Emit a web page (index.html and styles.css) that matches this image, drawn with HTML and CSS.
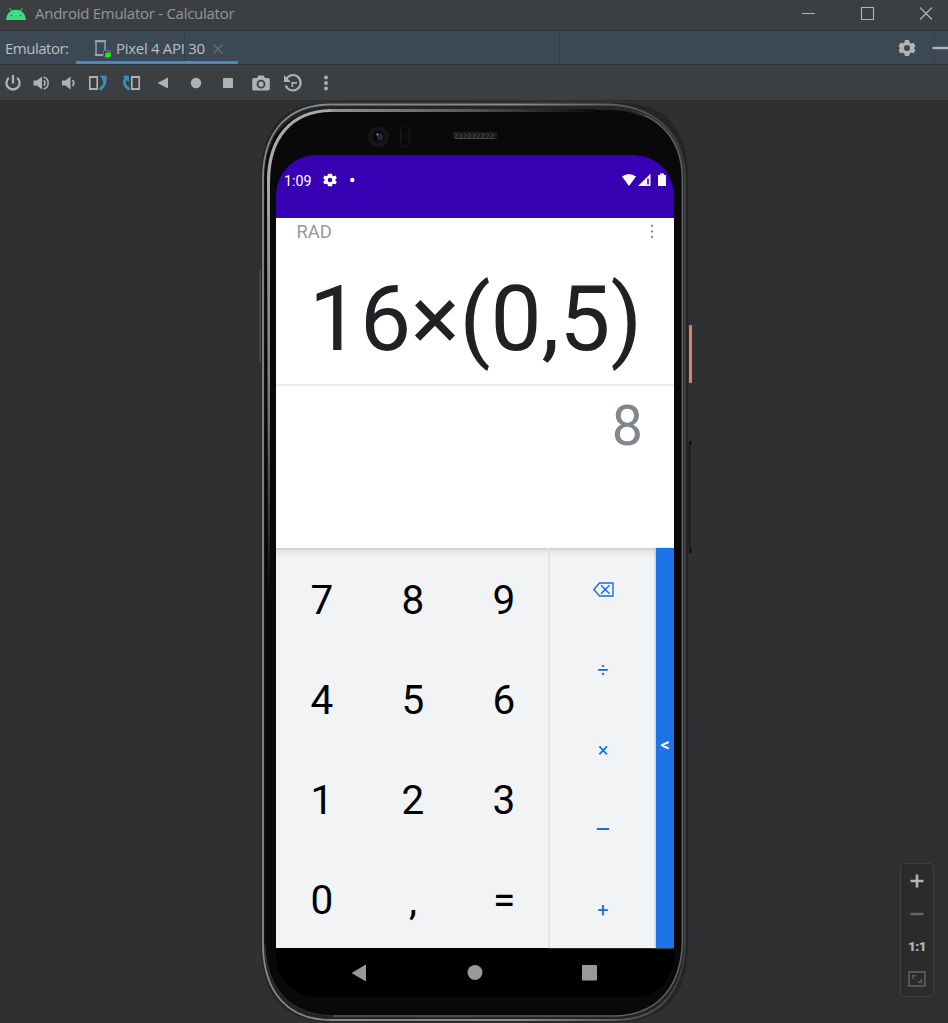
FILE: index.html
```html
<!DOCTYPE html>
<html lang="en">
<head>
<meta charset="utf-8">
<title>Android Emulator - Calculator</title>
<link rel="stylesheet" href="styles.css">
</head>
<body>
<div class="window">
  <header class="titlebar">
    <svg class="android" width="20" height="13" viewBox="0 0 20 13"><path d="M0 13C.4 8.500 2.200 5.500 5 4L3.200.8l.7-.4L5.800 3.500Q10 1.800 14.200 3.500L16.100.4l.7.4L15 4C17.800 5.500 19.600 8.500 20 13Z" fill="#3ddc84"/><circle cx="5.500" cy="8.600" r=".8" fill="#2a6b48"/><circle cx="14.500" cy="8.600" r=".8" fill="#2a6b48"/></svg>
    <span class="title">Android Emulator - Calculator</span>
    <svg class="winbtns" width="147" height="30" fill="none" stroke="#b4b4b4" stroke-width="1.100"><path d="M1 13.500H14M60.500 7.500h12v12h-12zM119 7.500l12 12m0-12l-12 12"/></svg>
  </header>
  <nav class="tabbar">
    <span class="label">Emulator:</span>
    <div class="tab">
      <svg width="17" height="18" viewBox="0 0 17 18"><path d="M8 15H1V1h9v10" fill="none" stroke="#9aa7b0" stroke-width="1.400"/><path d="M0 15h7M0 1.300h11" stroke="#9aa7b0" stroke-width="2"/><path d="M8.500 10.500h7v6h-7z" fill="none" stroke="#77618c"/><circle cx="13" cy="15" r="2.800" fill="#0f0"/></svg>
      <span class="tabname">Pixel 4 API 30</span>
      <svg class="close" width="10" height="10"><path d="M.5.5l9 9m0-9l-9 9" stroke="#66717b" stroke-width="1.100"/></svg>
    </div>
    <svg class="taboptions" width="389" height="33">
      <path d="M.5 0v33M375.500 0v33" stroke="#353e48"/>
      <g transform="translate(348 17)" fill="#b2b4b6"><path fill-rule="evenodd" d="M-2-8h4l.6 2.500 2 1.100L6.500-5.200 8.500-1.800 6.900 0 6.900.2 8.500 2 6.500 5.400 4.600 4.500l-2 1.200L2 8h-4l-.6-2.300-2-1.200L-6.500 5.400-8.500 2-6.900.2V0L-8.500-1.800-6.500-5.200l1.900.8 2-1.100ZM3 0A3 3 0 1 0-3 0 3 3 0 1 0 3 0Z"/></g>
      <path d="M373.500 17H389" stroke="#b2b4b6" stroke-width="2.400"/>
    </svg>
  </nav>
  <div class="toolbar">
    <svg width="340" height="34" fill="#afb1b3">
      <path d="M13 10v8.500M8.800 12.800a6.600 6.600 0 1 0 8.400 0" fill="none" stroke="#afb1b3" stroke-width="2.300"/>
      <path d="M33.500 15.500h3.500L42 11.500v13L37 20.500H33.500z"/><path d="M44 15.300q2 2.700 0 5.400M43.500 12a6.200 6.200 0 0 1 0 12" fill="none" stroke="#afb1b3" stroke-width="1.600"/>
      <path d="M62 15.500h3.500L70.500 11.500v13L65.500 20.500H62z"/><path d="M72.500 15q2.500 3 0 6" fill="none" stroke="#afb1b3" stroke-width="1.800"/>
      <path d="M89.800 12h7.400v12h-7.400zM131.800 12h7.400v12h-7.400z" fill="none" stroke="#afb1b3" stroke-width="1.700"/><path d="M89 12h9M89 24h9M131 12h9M131 24h9" stroke="#afb1b3" stroke-width="2.200"/>
      <path d="M99.500 24.500q8-5 3.500-11.500" fill="none" stroke="#3592c4" stroke-width="2.700"/><path d="M99.500 10.800h7v6.500z" fill="#3592c4"/>
      <path d="M129.500 24.500q-8-5-3.500-11.500" fill="none" stroke="#3592c4" stroke-width="2.700"/><path d="M129.500 10.800h-7v6.500z" transform="translate(252 0) scale(-1 1)" fill="none"/><path d="M122.500 10.800h6.500v6.500z" fill="#3592c4"/>
      <path d="M168 12.500v11L157.500 18z"/><circle cx="196" cy="18" r="5.200"/><rect x="223" y="13" width="10" height="10" rx="1"/>
      <path fill-rule="evenodd" d="M254 13h3l1.500-2.500h5L265 13h3q1.800 0 1.800 1.800v8.900Q269.800 25.500 268 25.500h-14q-1.800 0-1.800-1.800v-8.900Q252.200 13 254 13Zm11.400 6.200a4.400 4.400 0 1 0-8.800 0 4.400 4.400 0 1 0 8.800 0Z"/><circle cx="261" cy="19.200" r="2.600"/>
      <path d="M286.200 14a7.700 7.700 0 1 1-.5 6.500" fill="none" stroke="#afb1b3" stroke-width="2.100"/><path d="M284 10v7h7zM291.500 17h5.500v1.700h-3.800V22h-1.700z"/>
      <circle cx="326" cy="12.500" r="1.900"/><circle cx="326" cy="18" r="1.900"/><circle cx="326" cy="23.500" r="1.900"/>
    </svg>
  </div>
  <main class="stage">
    <div class="phone">
      <svg class="shell" width="438" height="923" viewBox="0 0 438 923">
        <defs>
          <linearGradient id="rim" x1="0" y1="0" x2="1" y2="0"><stop offset="0" stop-color="#85898c"/><stop offset=".6" stop-color="#8a8c8e"/><stop offset="1" stop-color="#3c3d3e"/></linearGradient>
          <linearGradient id="glint" gradientUnits="userSpaceOnUse" x1="60" y1="0" x2="340" y2="0"><stop offset="0" stop-color="#999"/><stop offset=".5" stop-color="#5f5f5f"/><stop offset="1" stop-color="#0b0b0c"/></linearGradient>
          <linearGradient id="fade" x1="0" y1="0" x2="0" y2="1"><stop offset="0" stop-color="#a8a8a8"/><stop offset=".55" stop-color="#777"/><stop offset="1" stop-color="#0b0a0c"/></linearGradient>
        </defs>
        <path d="M5 170v92" stroke="#55585b"/>
        <path d="M434.500 342v109" stroke="#1b1c1d" stroke-width="2"/><path d="M435.500 341v4M435.500 449v4" stroke="#0c0c0c" stroke-width="2"/>
        <path d="M74 3H366Q433 3 433 78V850Q431 922 360 922H76Q7 922 6 846V74Q7 3 74 3Z" fill="#242527"/>
        <rect x="434" y="225" width="3" height="58" rx="1" fill="#e47e68"/>
        <path d="M76 9H355C400 9 426 36 427 78V844C425 894 398 917 358 917H78C36 917 10 890 9 844V78C10 34 34 9 76 9Z" fill="#09090a" stroke="#242526"/>
        <path d="M76 9H355C400 9 427 36 427.500 78V844C425 892 398 916 358 916H78" fill="none" stroke="#606060" stroke-width="1.600"/>
        <path d="M76 9H355Q375 9 390 17" fill="none" stroke="#242424" stroke-width="2"/>
        <path d="M78 916C36 915 11 890 10 844" fill="none" stroke="#3a3a3a"/>
        <path d="M360 920H76C34 920 9 894 8 846V76C9 30 34 4.500 76 4.500H350C398 4.500 428 32 430 76V846C427 898 400 920 360 920Z" fill="none" stroke="url(#rim)" stroke-width="1.800"/>
        <path d="M74 10.500H340" stroke="url(#glint)" stroke-width="3"/>
        <path d="M13.500 80C14 38 36 11 76 10.500" fill="none" stroke="#aaa" stroke-width="3.200"/>
        <path d="M12 78h3v376l-1 40h-1z" fill="url(#fade)"/>
        <circle cx="123.500" cy="37" r="10.500" fill="#151516"/><circle cx="123.500" cy="36.500" r="6" fill="#08090b"/><ellipse cx="125" cy="37" rx="3" ry="3.600" fill="#22263a"/><circle cx="122.500" cy="34.500" r="1.100" fill="#999"/>
        <rect x="145.500" y="26" width="9" height="21" rx="4" fill="#0d0d0e" stroke="#171718"/><circle cx="150" cy="30" r="3" fill="#060607"/><circle cx="150" cy="42" r="3" fill="#060607"/>
        <rect x="198" y="32" width="44" height="7" rx="2" fill="#1d1d1e"/><path d="M200 33.500l2.500 2-2.500 2m4.500-4l2.500 2-2.500 2m4.500-4l2.500 2-2.500 2m4.500-4l2.500 2-2.500 2m4.500-4l2.500 2-2.500 2m4.500-4l2.500 2-2.500 2m4.500-4l2.500 2-2.500 2m4.500-4l2.500 2-2.500 2m4.500-4l2.500 2-2.500 2" fill="none" stroke="#4a4a4a"/><path d="M200 38.500h40" stroke="#484848"/>
      </svg>
      <section class="screen">
        <div class="status">
          <span class="time">1:09</span>
          <svg class="notif" width="34" height="14"><path fill="#fff" fill-rule="evenodd" d="M5 .7h4l.5 2 1 .5 2-.6 1.300 2.300-1.400 1.600v1l1.400 1.500-1.300 2.300-2-.6-1 .6-.5 2H5l-.5-2-1-.6-2 .6L.2 9l1.400-1.500v-1L.2 4.900l1.300-2.300 2 .6 1-.5ZM9.200 7A2.200 2.200 0 1 0 4.800 7 2.200 2.200 0 1 0 9.200 7Z"/><circle cx="29.300" cy="7" r="2.200" fill="#fff"/></svg>
          <svg class="signals" width="46" height="14"><path d="M1 3.500Q8-1.500 15 3.500L8 13z" fill="#fff"/><path d="M17 13L29.500.8V13z" fill="#fff"/><path d="M26 5.500h2v6h-2z" fill="#5b35bb"/><path d="M37 2h2V.5h4V2h2v11h-8z" fill="#fff"/></svg>
        </div>
        <div class="display">
          <div class="modebar"><span>RAD</span><svg width="4" height="16" fill="#8c8c8c"><circle cx="2" cy="1.700" r="1.200"/><circle cx="2" cy="7.400" r="1.200"/><circle cx="2" cy="13" r="1.200"/></svg></div>
          <div class="formula">16×(0,5)</div>
          <div class="result">8</div>
        </div>
        <div class="pad">
          <div class="digits"><span>7</span><span>8</span><span>9</span><span>4</span><span>5</span><span>6</span><span>1</span><span>2</span><span>3</span><span>0</span><span>,</span><span>=</span></div>
          <div class="operators">
            <span><svg width="21" height="15" fill="none" stroke="#176fd6" stroke-width="1.400"><path d="M.9 7.500L6.500 1H20v13H6.500zM8 3.200l8.600 8.600m0-8.600l-8.600 8.600"/></svg></span>
            <span>÷</span><span>×</span><span class="minus">–</span><span>+</span>
          </div>
          <div class="drawer">&lt;</div>
        </div>
        <div class="navkeys">
          <svg width="398" height="49" fill="#999"><path d="M90 16.500v17L75.500 25z"/><circle cx="199" cy="24.500" r="7.500"/><rect x="306" y="17" width="15" height="15.500" rx="1"/></svg>
        </div>
      </section>
    </div>
    <aside class="zoomer">
      <svg width="14" height="14"><path d="M7 .5v13M.5 7h13" stroke="#b4b4b4" stroke-width="2.600"/></svg>
      <svg width="14" height="14"><path d="M.5 7h13" stroke="#666" stroke-width="2.400"/></svg>
      <span>1:1</span>
      <svg width="18" height="16" fill="none" stroke="#5d5d5d"><rect x="1" y="1" width="16" height="14" stroke-width="1.700"/><path d="M4.700 8V4.700H8M10 11.300h3.300V8" stroke-width="1.500"/></svg>
    </aside>
  </main>
</div>
</body>
</html>
```
FILE: styles.css
```css
* { box-sizing: border-box; }
body { margin: 0; background: #2f3032; font-family: Roboto, sans-serif; }
svg { display: block; flex: none; }
.window { width: 948px; height: 1023px; display: flex; flex-direction: column; overflow: hidden; }

.titlebar { height: 31px; display: flex; background: #3c3f41; border-bottom: 1px solid #303233; font-family: "Open Sans", sans-serif; }
.android { margin: 7px 9px 0 6px; }
.title { color: #949698; font-size: 15px; line-height: 26px; letter-spacing: -.27px; white-space: nowrap; }
.winbtns { margin-left: auto; }

.tabbar { height: 34px; display: flex; background: #3d4855; border-bottom: 1px solid #303337; color: #bbbdc0; font: 15px/34px "Open Sans", sans-serif; letter-spacing: -.5px; white-space: nowrap; }
.label { width: 76px; padding-left: 5px; }
.tab { width: 162px; display: flex; padding-left: 19px; border-bottom: 3px solid #4a88c7; background: linear-gradient(#353e48, #353e48) 108px 0 / 1px 100% no-repeat; }
.tab svg { margin-top: 9px; }
.tabname { width: 97px; margin-left: 4px; letter-spacing: -.3px; }
.tab .close { margin-top: 13px; }
.taboptions { margin-left: auto; }

.toolbar { height: 35px; background: #3c3f41; }
.stage { position: relative; height: 923px; background: #2f3032; border-top: 1px solid #2b2c2e; }

.phone { position: relative; width: 438px; height: 923px; margin: -1px 0 0 255px; padding: 55px 0 0 21px; }
.shell { position: absolute; left: 0; top: 0; }
.screen { position: relative; width: 398px; height: 842px; border-radius: 40px; overflow: hidden; background: #000; }
.status { height: 63px; display: flex; padding: 18px 7px 0 8px; background: #3700b3; }
.time { width: 39px; color: #fff; font-size: 14.300px; line-height: 16px; }
.signals { margin-left: auto; }

.display { height: 330px; background: #fff; }
.modebar { height: 30px; display: flex; justify-content: space-between; padding: 6px 20px 0 20.500px; color: #96999b; font-size: 18.400px; line-height: 16px; }
.formula { height: 138px; padding: 18px 32px 0 0; border-bottom: 2px solid #ededed; color: #202124; font-size: 91px; line-height: 107px; text-align: right; letter-spacing: -.1px; }
.result { padding: 9px 31px 0 0; color: #80868b; font-size: 55.500px; line-height: 64px; text-align: right; }

.pad { height: 400px; display: flex; background: linear-gradient(#c7cacb, #e5e7e8 3px, #f1f3f5 10px); }
.digits { width: 273px; padding-left: .5px; display: grid; grid-template: repeat(4, 100px) / repeat(3, 91px); font-size: 40.500px; line-height: 105px; text-align: center; }
.operators { width: 107px; display: grid; grid-template-rows: repeat(5, 80px); border-left: 1px solid #dcdee0; box-shadow: -1px 0 1px #e5e7e9; color: #176fd6; font-size: 20px; line-height: 84px; text-align: center; }
.operators svg { margin: 34px auto 0; }
.minus { font-size: 25px; }
.drawer { width: 18px; background: #1d73e8; box-shadow: -1px 0 2px #b5c4da; color: #fff; font-size: 18px; font-weight: 500; line-height: 394px; text-align: center; }
.navkeys { height: 49px; background: #000; }

.zoomer { position: absolute; left: 900px; top: 762px; width: 34px; height: 134px; display: flex; flex-direction: column; align-items: center; padding-top: 10px; background: #2b2b2b; border: 1px solid #3e3f40; border-radius: 4px; }
.zoomer svg + svg { margin-top: 19px; }
.zoomer span { margin: 18px 0 18px; color: #b4b4b4; font: 900 13.500px/14px Roboto, sans-serif; letter-spacing: -.5px; }
```
